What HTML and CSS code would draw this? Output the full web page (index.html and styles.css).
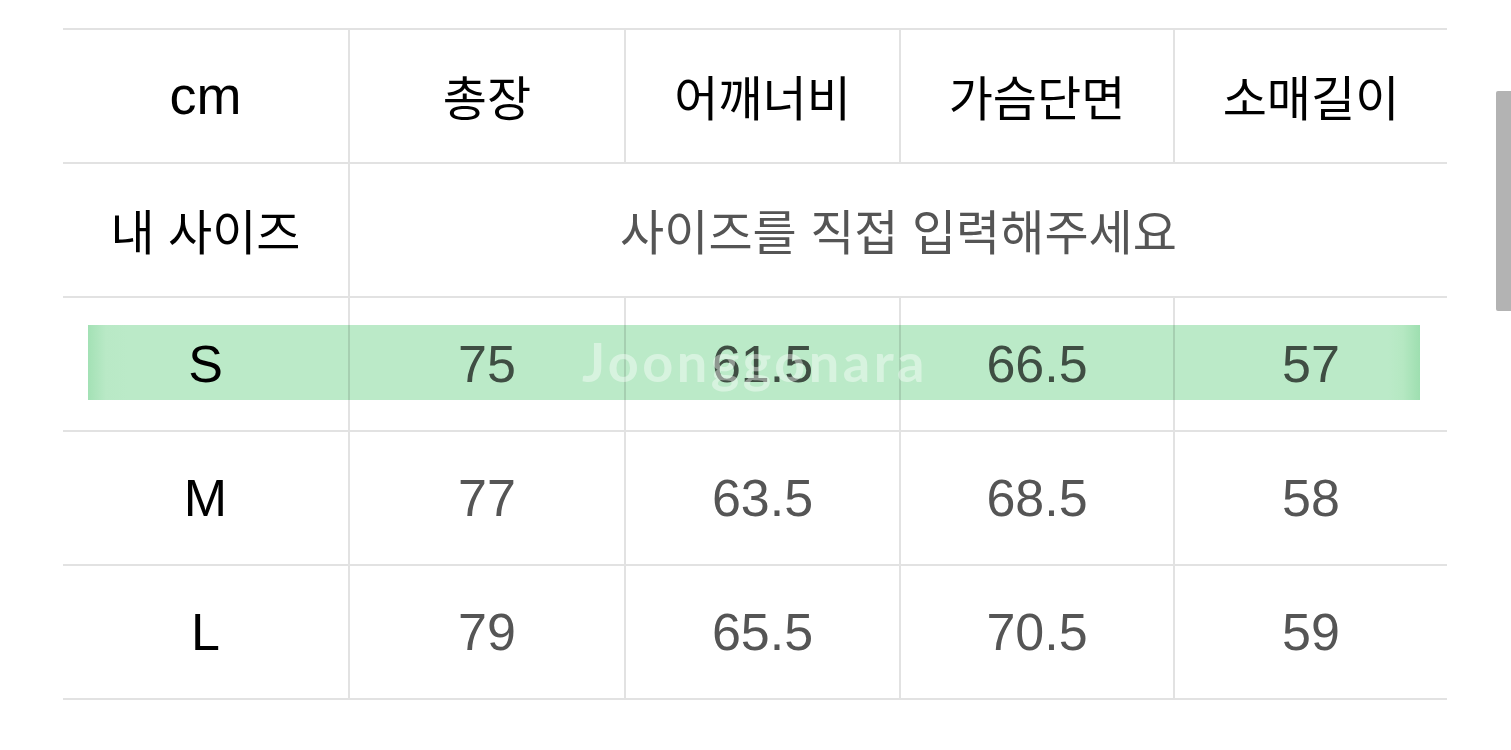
FILE: index.html
```html
<!DOCTYPE html>
<html lang="ko">
<head>
<meta charset="utf-8">
<title>사이즈표</title>
<link rel="stylesheet" href="styles.css">
</head>
<body>
<div class="sheet">
  <div class="grid">
    <div class="cell first head unit">cm</div>
    <div class="cell head">총장</div>
    <div class="cell head">어깨너비</div>
    <div class="cell head">가슴단면</div>
    <div class="cell head">소매길이</div>

    <div class="cell first head">내 사이즈</div>
    <div class="cell wide note">사이즈를 직접 입력해주세요</div>

    <div class="cell first size">S</div>
    <div class="cell num">75</div>
    <div class="cell num">61.5</div>
    <div class="cell num">66.5</div>
    <div class="cell num">57</div>

    <div class="cell first size">M</div>
    <div class="cell num">77</div>
    <div class="cell num">63.5</div>
    <div class="cell num">68.5</div>
    <div class="cell num">58</div>

    <div class="cell first size">L</div>
    <div class="cell num">79</div>
    <div class="cell num">65.5</div>
    <div class="cell num">70.5</div>
    <div class="cell num">59</div>

    <div class="highlight"></div>
    <div class="watermark">Joonggonara</div>
  </div>
</div>
<div class="scrollbar"></div>
</body>
</html>
```

FILE: styles.css
```css
html, body {
  margin: 0;
  padding: 0;
  background: #ffffff;
}

body {
  font-family: "Liberation Sans", "Noto Sans CJK KR", sans-serif;
  width: 1511px;
  height: 750px;
  overflow: hidden;
  position: relative;
}

.sheet {
  padding: 28px 0 0 63px;
}

.grid {
  position: relative;
  display: grid;
  grid-template-columns: 285px 276px 275px 274px 274px;
  width: 1384px;
  border-top: 2px solid #e2e2e2;
}

.cell {
  height: 132px;
  border-bottom: 2px solid #e2e2e2;
  border-left: 2px solid #e2e2e2;
  display: flex;
  align-items: center;
  justify-content: center;
  color: #000;
}

.cell.first {
  border-left: none;
}

.cell.wide {
  grid-column: span 4;
}

.head {
  font-size: 48px;
  padding-bottom: 3px;
  box-sizing: border-box;
  height: 134px;
}

.head.unit {
  font-size: 54px;
}

.note {
  font-family: "Noto Sans CJK KR", sans-serif;
  font-size: 48px;
  color: #555;
  padding-bottom: 3px;
  box-sizing: border-box;
  height: 134px;
}

.size {
  font-size: 52px;
  color: #000;
}

.num {
  font-size: 52px;
  color: #555;
}

.highlight {
  position: absolute;
  left: 25px;
  top: 295px;
  width: 1332px;
  height: 75px;
  background: linear-gradient(to right,
    #a3e1b5 0px, #b9e9c6 18px, #bbeac8 40px,
    #bbeac8 1300px, #b5e8c2 1315px, #9edfb0 1332px);
  mix-blend-mode: multiply;
  pointer-events: none;
}

.watermark {
  position: absolute;
  left: 519px;
  top: 299px;
  font-family: Lato, "Open Sans", sans-serif;
  font-weight: 700;
  font-size: 54px;
  letter-spacing: 3.5px;
  color: rgba(255, 255, 255, 0.42);
  pointer-events: none;
}

.scrollbar {
  position: absolute;
  left: 1496px;
  top: 91px;
  width: 15px;
  height: 220px;
  background: #b3b3b3;
  border-radius: 2px 0 0 2px;
}
```
